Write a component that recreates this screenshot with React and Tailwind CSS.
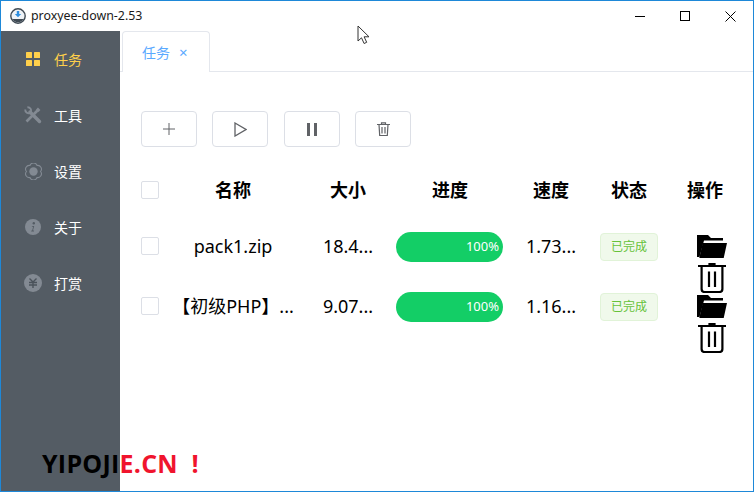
const FONT = 'font-["Noto_Sans","Noto_Sans_CJK_SC",sans-serif]';

const menu = [
  { label: '任务', active: true, icon: <GridIcon /> },
  { label: '工具', icon: <ToolsIcon /> },
  { label: '设置', icon: <GearIcon /> },
  { label: '关于', icon: <InfoIcon /> },
  { label: '打赏', icon: <YenIcon /> },
];

const rows = [
  { name: 'pack1.zip', size: '18.4...', speed: '1.73...' },
  { name: '【初级PHP】...', size: '9.07...', speed: '1.16...' },
];

const columns = 'grid grid-cols-[19px_146px_84px_120px_82px_74px_78px] grid-rows-[60px] items-center';

function GridIcon() {
  return (
    <svg width="14" height="14" viewBox="0 0 14 14" fill="#ffd04b">
      <rect x="0" y="0" width="6" height="6" rx="0.5" />
      <rect x="8" y="0" width="6" height="6" rx="0.5" />
      <rect x="0" y="8" width="6" height="6" rx="0.5" />
      <rect x="8" y="8" width="6" height="6" rx="0.5" />
    </svg>
  );
}

function ToolsIcon() {
  return (
    <svg width="18" height="18" viewBox="0 0 18 18" fill="none" stroke="#838a93">
      <path d="M2.5 15.5L14 4" strokeWidth="2.6" />
      <path d="M13 2.5l2.5 2.5" strokeWidth="2.6" />
      <path d="M6 6l9.5 9.5" strokeWidth="3.4" strokeLinecap="round" />
      <path d="M1.2 3.5a3.6 3.6 0 0 0 5.2 3.4M3.4 1.2a3.6 3.6 0 0 1 3.4 5.2" strokeWidth="1.9" />
    </svg>
  );
}

function GearIcon() {
  return (
    <svg width="17" height="17" viewBox="0 0 17 17" fill="none">
      <path
        d="M15.5 8.5A3.7 3.7 0 0 1 12 14.56A3.7 3.7 0 0 1 5 14.56A3.7 3.7 0 0 1 1.5 8.5A3.7 3.7 0 0 1 5 2.44A3.7 3.7 0 0 1 12 2.44A3.7 3.7 0 0 1 15.5 8.5z"
        stroke="#838a93"
        strokeWidth="1.1"
      />
      <circle cx="8.5" cy="8.5" r="4.2" fill="#838a93" />
    </svg>
  );
}

function InfoIcon() {
  return (
    <svg width="16" height="16" viewBox="0 0 16 16">
      <circle cx="8" cy="8" r="8" fill="#838a93" />
      <circle cx="8.8" cy="4.3" r="1.2" fill="#545c64" />
      <path d="M6.6 7h2.6l-1.2 4.6h1.1l-.2.8H6.2l.2-.8h.8l.9-3.8h-.7z" fill="#545c64" />
    </svg>
  );
}

function YenIcon() {
  return (
    <svg width="18" height="18" viewBox="0 0 18 18" fill="none">
      <circle cx="9" cy="9" r="9" fill="#838a93" />
      <path d="M5.5 4.5L9 8l3.5-3.5M5 8.5h8M5 11h8M9 8v6" stroke="#4b535b" strokeWidth="1.4" />
    </svg>
  );
}

function AppLogo() {
  return (
    <svg width="16" height="16" viewBox="0 0 16 16">
      <circle cx="8" cy="8" r="7.2" fill="#eef2f6" stroke="#3f4a54" strokeWidth="1.4" />
      <path d="M2.5 11h11a6.3 6.3 0 0 1-11 0z" fill="#3f4a54" />
      <path d="M6.8 3h2.4v3h2L8 9.2 4.8 6h2z" fill="#2f8fe0" />
    </svg>
  );
}

function FolderIcon() {
  return (
    <svg width="30" height="23" viewBox="0 0 30 23" fill="#000">
      <path d="M0 0h11l3 3h12v2.5H7L2.5 22H0z" />
      <path d="M5.7 8H30l-3.3 15H2.3z" />
    </svg>
  );
}

function TrashIcon() {
  return (
    <svg width="28" height="30" viewBox="0 0 28 30" fill="none" stroke="#000" strokeWidth="2.2">
      <path d="M0 3h28M11.5 3V.8h5V3M3.6 3v23a3 3 0 0 0 3 3h14.8a3 3 0 0 0 3-3V3M11 8.5v15.5M17 8.5v15.5" />
    </svg>
  );
}

function Checkbox() {
  return <span className="block h-[18px] w-[18px] rounded-[2px] border border-[#dcdfe6] bg-white" />;
}

function ToolButton({ children }) {
  return (
    <button className="flex h-[36px] w-[56px] items-center justify-center rounded-[4px] border border-[#dcdfe6] bg-white">
      {children}
    </button>
  );
}

export default function App() {
  return (
    <div className={`relative flex h-[492px] w-[754px] flex-col overflow-hidden border border-[#1e88d8] bg-white ${FONT}`}>
      {/* Title bar */}
      <header className="flex h-[30px] shrink-0 items-center bg-white pl-[9px]">
        <AppLogo />
        <span className="ml-[5px] text-[12.4px] text-[#1a1a1a]">proxyee-down-2.53</span>
        <div className="ml-auto flex items-center">
          <span className="flex w-[44px] justify-center">
            <svg width="11" height="11" viewBox="0 0 11 11"><path d="M0 5.5h10" stroke="#000" /></svg>
          </span>
          <span className="flex w-[46px] justify-center">
            <svg width="11" height="11" viewBox="0 0 11 11"><rect x="0.5" y="0.5" width="9" height="9" fill="none" stroke="#000" /></svg>
          </span>
          <span className="flex w-[45px] justify-center">
            <svg width="11" height="11" viewBox="0 0 11 11"><path d="M.5.5l10 10M10.5.5l-10 10" stroke="#000" /></svg>
          </span>
        </div>
      </header>

      <div className="flex min-h-0 flex-1">
        {/* Sidebar */}
        <aside className="w-[119px] shrink-0 bg-[#545c64]">
          {menu.map((item) => (
            <div key={item.label} className="flex h-[56px] items-center">
              <span className="flex w-[53px] justify-center pl-[11px]">{item.icon}</span>
              <span className={`text-[14px] ${item.active ? 'text-[#ffd04b]' : 'text-white'}`}>{item.label}</span>
            </div>
          ))}
        </aside>

        <main className="min-w-0 flex-1">
          {/* Tabs */}
          <div className="flex h-[41px] border-b border-[#e4e7ed] pl-[2px]">
            <div className="flex h-[41px] w-[88px] items-center rounded-t-[4px] border border-b-0 border-[#e4e7ed] bg-white pl-[19px] text-[14px] text-[#5aa9ff]">
              <span>任务</span>
              <span className="ml-[9px] text-[15px] leading-none">×</span>
            </div>
          </div>

          <div className="pl-[21px] pt-[39px]">
            {/* Toolbar */}
            <div className="flex gap-[15.4px]">
              <ToolButton>
                <svg width="12" height="12" viewBox="0 0 12 12"><path d="M6 0v12M0 6h12" stroke="#606266" /></svg>
              </ToolButton>
              <ToolButton>
                <svg width="13" height="15" viewBox="0 0 13 15" fill="none"><path d="M1 1l11 6.5-11 6.5z" stroke="#606266" strokeWidth="1.3" /></svg>
              </ToolButton>
              <ToolButton>
                <svg width="10" height="13" viewBox="0 0 10 13" fill="#606266"><rect width="3" height="13" /><rect x="7" width="3" height="13" /></svg>
              </ToolButton>
              <ToolButton>
                <svg width="13" height="14" viewBox="0 0 13 14" fill="none" stroke="#606266" strokeWidth="1.2">
                  <path d="M0 2.5h13M4.5 2.5V.8h4v1.7M2 2.5l.7 11h7.6l.7-11M5 5v6.5M8 5v6.5" />
                </svg>
              </ToolButton>
            </div>

            {/* Table */}
            <div className="mt-[13px] flex flex-col">
              <div className={`${columns} text-[18px] font-bold text-black`}>
                <Checkbox />
                <span className="text-center">名称</span>
                <span className="text-center">大小</span>
                <span className="text-center">进度</span>
                <span className="text-center">速度</span>
                <span className="text-center">状态</span>
                <span className="text-center">操作</span>
              </div>

              {rows.map((row, i) => (
                <div key={row.name} className={`${columns} text-[18px] text-black ${i === 0 ? '-mt-[4px]' : ''}`}>
                  <Checkbox />
                  <span className="text-center">{row.name}</span>
                  <span className="text-center">{row.size}</span>
                  <div className="ml-[6px] mt-[2px] flex h-[30px] w-[107px] items-center justify-end rounded-full bg-[#13ce66] pr-[4px] text-[13px] text-white">
                    100%
                  </div>
                  <span className="text-center">{row.speed}</span>
                  <div className="mt-[2px] flex justify-center">
                    <span className="flex h-[28px] w-[58px] items-center justify-center rounded-[4px] border border-[#e1f3d8] bg-[#f0f9eb] text-[12px] text-[#67c23a]">
                      已完成
                    </span>
                  </div>
                  {/* the icons wrap and hang out of the row, like in the original cell */}
                  <div className="mt-[19px] flex flex-col items-center gap-[5px] self-start pl-[14px]">
                    <FolderIcon />
                    <TrashIcon />
                  </div>
                </div>
              ))}
            </div>
          </div>
        </main>
      </div>

      {/* Watermark over the page */}
      <div className='absolute left-[41px] top-[445px] whitespace-pre font-["Open_Sans",sans-serif] text-[25px] font-bold leading-[34px] tracking-[0.25px] text-[#f0142d]'>
        <span className="text-black">YIPOJI</span>E.CN  !
      </div>

      {/* Mouse pointer */}
      <svg className="absolute left-[356px] top-[24px]" width="14" height="20" viewBox="0 0 14 20" fill="#fff" stroke="#333" strokeWidth="1">
        <path d="M1 1v15l3.5-3.2 2.6 5.7 2.6-1.2-2.6-5.5H12z" />
      </svg>
    </div>
  );
}
